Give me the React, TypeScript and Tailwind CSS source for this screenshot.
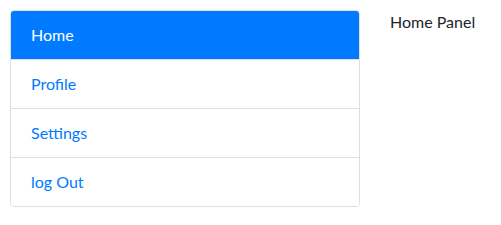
export default function App() {
  const items = ["Home", "Profile", "Settings", "log Out"];
  return (
    <div className="flex p-[10px] font-['Segoe_UI','Lato','Open_Sans',sans-serif] text-base">
      <div className="w-[350px] flex flex-col rounded border border-[#dfdfdf] overflow-hidden">
        {items.map((item, i) => (
          <a
            key={item}
            href="#"
            className={
              i === 0
                ? "px-5 py-3 leading-6 bg-[#007bff] text-white"
                : "px-5 py-3 leading-6 text-[#007bff] border-t border-[#dfdfdf] bg-white"
            }
          >
            {item}
          </a>
        ))}
      </div>
      <div className="ml-[30px] leading-6 text-[#212529]">Home Panel</div>
    </div>
  );
}
